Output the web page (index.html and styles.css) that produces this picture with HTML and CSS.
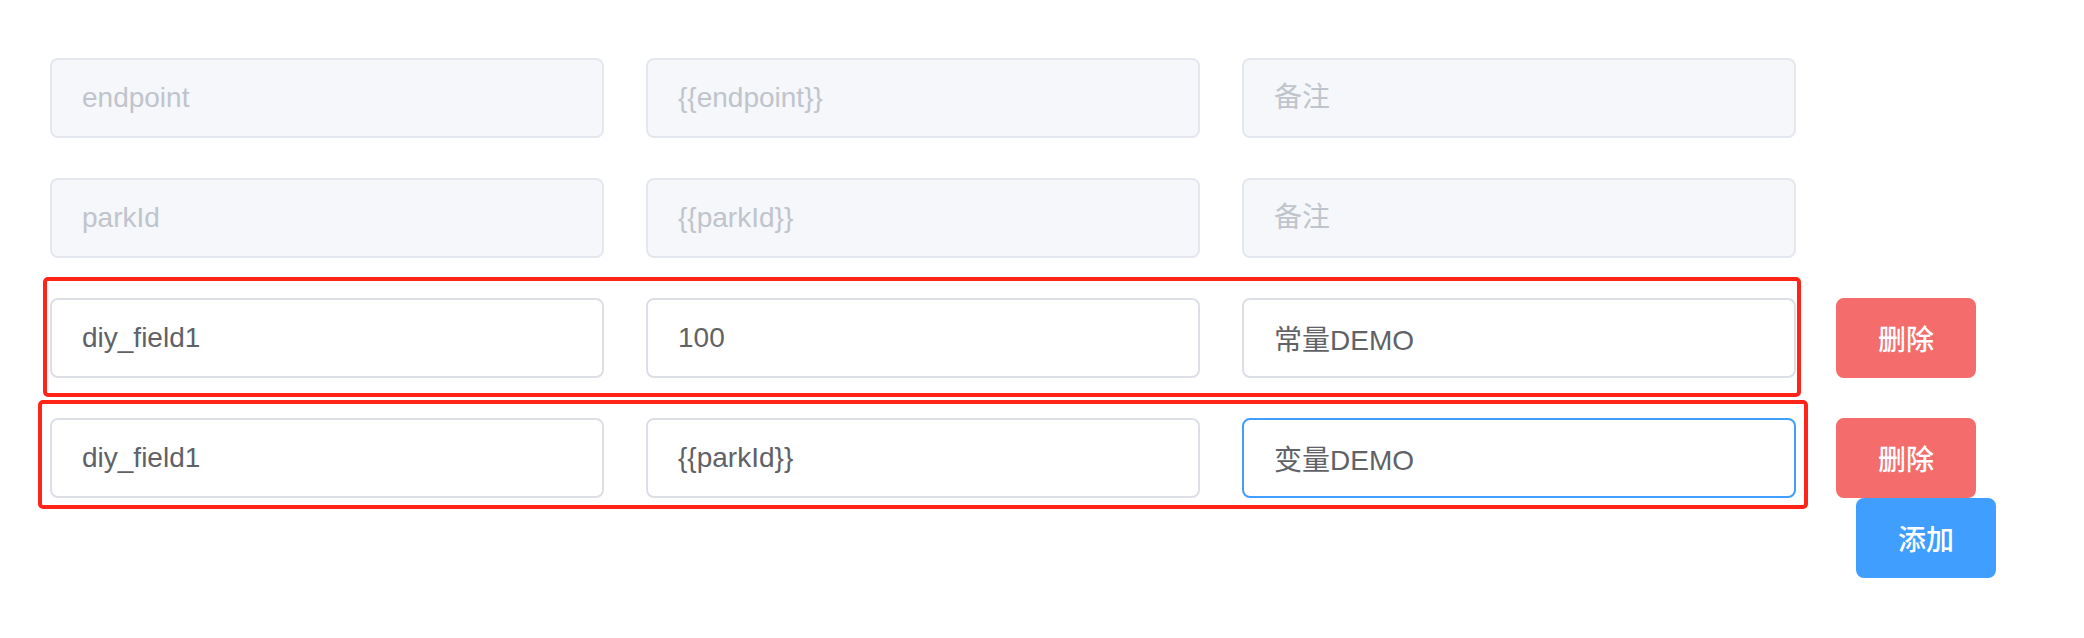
FILE: index.html
```html
<!DOCTYPE html>
<html lang="zh-CN">
<head>
<meta charset="utf-8">
<title>参数配置</title>
<link rel="stylesheet" href="styles.css">
</head>
<body>
<div class="page">
  <div class="row">
    <div class="fields">
      <input class="field is-disabled" value="endpoint" disabled>
      <input class="field is-disabled" value="{{endpoint}}" disabled>
      <input class="field is-disabled" placeholder="备注" disabled>
    </div>
  </div>
  <div class="row">
    <div class="fields">
      <input class="field is-disabled" value="parkId" disabled>
      <input class="field is-disabled" value="{{parkId}}" disabled>
      <input class="field is-disabled" placeholder="备注" disabled>
    </div>
  </div>
  <div class="row">
    <div class="fields">
      <input class="field" value="diy_field1">
      <input class="field" value="100">
      <input class="field" value="常量DEMO">
    </div>
    <button class="btn btn-danger">删除</button>
  </div>
  <div class="row last">
    <div class="fields">
      <input class="field" value="diy_field1">
      <input class="field" value="{{parkId}}">
      <input class="field is-focus" value="变量DEMO">
    </div>
    <button class="btn btn-danger">删除</button>
  </div>
  <div class="add-row">
    <button class="btn btn-primary">添加</button>
  </div>

  <div class="mark mark-one"></div>
  <div class="mark mark-two"></div>
</div>
</body>
</html>
```

FILE: styles.css
```css
html, body {
  margin: 0;
  padding: 0;
  background: #ffffff;
}

.page {
  position: relative;
  padding: 58px 0 0 50px;
  font-family: "Liberation Sans", "Noto Sans CJK SC", sans-serif;
}

.row {
  display: flex;
  align-items: center;
  height: 80px;
  margin-bottom: 40px;
}

.row.last {
  margin-bottom: 0;
}

.fields {
  display: flex;
  gap: 42px;
}

.field {
  box-sizing: border-box;
  width: 554px;
  height: 80px;
  padding: 0 30px;
  border: 2px solid #dcdfe6;
  border-radius: 8px;
  background: #ffffff;
  color: #606266;
  font-family: "Liberation Sans", "Noto Sans CJK SC", sans-serif;
  font-size: 28px;
  outline: none;
  margin: 0;
}

.field.is-disabled {
  background: #f5f7fa;
  border-color: #e4e7ed;
  color: #c0c4cc;
  -webkit-text-fill-color: #c0c4cc;
  opacity: 1;
}

.field::placeholder {
  color: #c0c4cc;
  -webkit-text-fill-color: #c0c4cc;
  opacity: 1;
}

.field.is-focus {
  border-color: #409eff;
}

.btn {
  box-sizing: border-box;
  width: 140px;
  height: 80px;
  border: 2px solid transparent;
  border-radius: 8px;
  color: #ffffff;
  font-family: "Liberation Sans", "Noto Sans CJK SC", sans-serif;
  font-size: 28px;
  font-weight: 500;
  padding: 0;
  margin: 0;
  cursor: pointer;
}

.row .btn {
  margin-left: 40px;
}

.btn-danger {
  background: #f56c6c;
  border-color: #f56c6c;
}

.btn-primary {
  background: #409eff;
  border-color: #409eff;
}

.add-row {
  display: flex;
  padding-left: 1806px;
}

.mark {
  position: absolute;
  box-sizing: border-box;
  border: 4px solid #ff2418;
  border-radius: 5px;
  pointer-events: none;
}

.mark-one {
  left: 43px;
  top: 277px;
  width: 1758px;
  height: 120px;
}

.mark-two {
  left: 38px;
  top: 400px;
  width: 1770px;
  height: 109px;
}
```
